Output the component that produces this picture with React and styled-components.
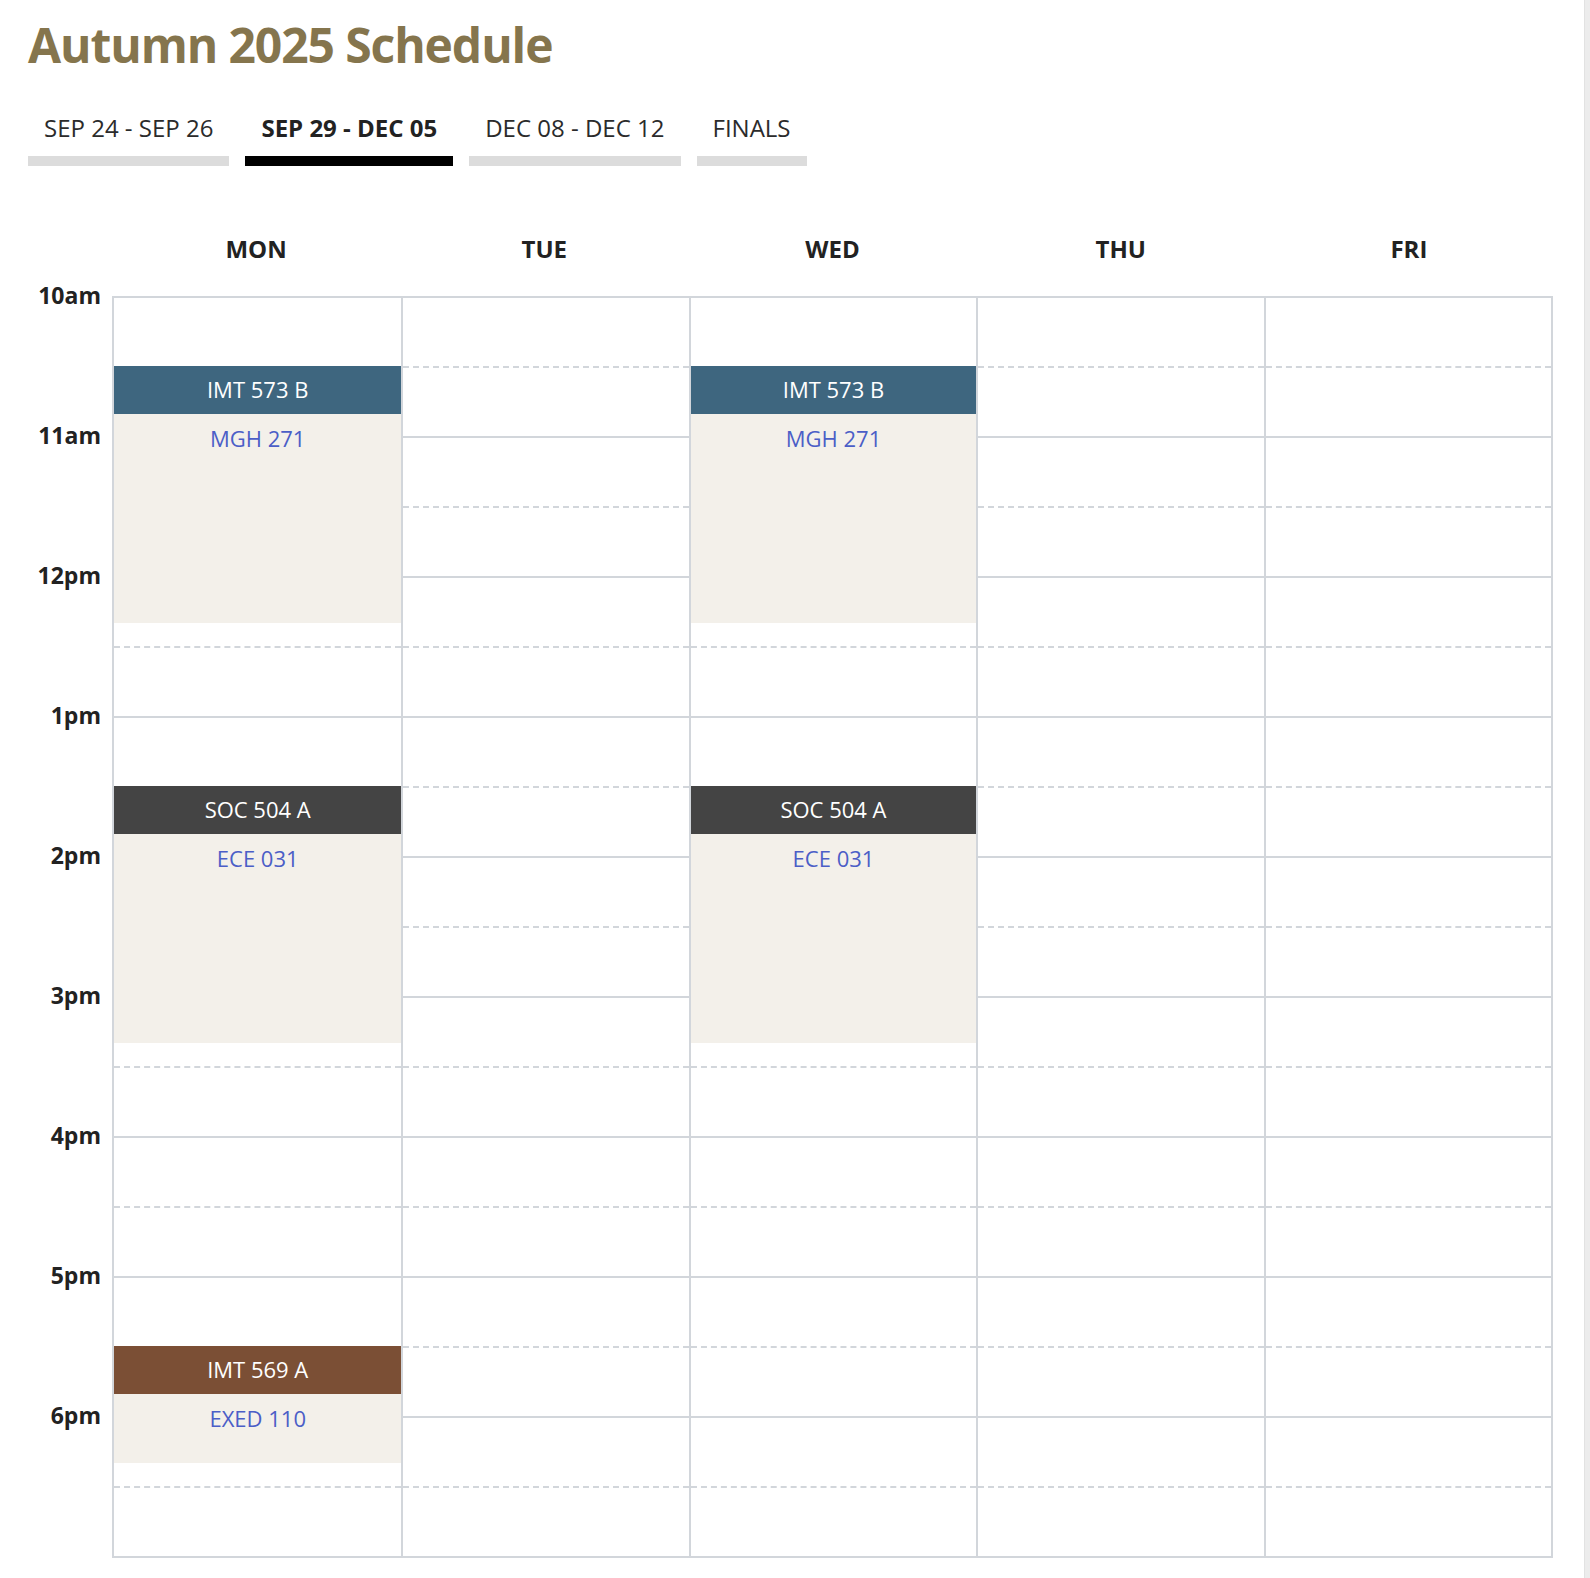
import React from "react";
import styled, { createGlobalStyle } from "styled-components";

const HOUR = 140;
const START = 10;
const HOURS = ["10am", "11am", "12pm", "1pm", "2pm", "3pm", "4pm", "5pm", "6pm"];
const DAYS = ["MON", "TUE", "WED", "THU", "FRI"];
const TABS = [
  { label: "SEP 24 - SEP 26" },
  { label: "SEP 29 - DEC 05", active: true },
  { label: "DEC 08 - DEC 12" },
  { label: "FINALS" },
];

const classes = [
  { code: "IMT 573 B", room: "MGH 271", color: "#3e667f", days: [0, 2], start: 10.5, end: 12 + 1 / 3 },
  { code: "SOC 504 A", room: "ECE 031", color: "#444444", days: [0, 2], start: 13.5, end: 15 + 1 / 3 },
  { code: "IMT 569 A", room: "EXED 110", color: "#7b4f35", days: [0], start: 17.5, end: 18 + 1 / 3 },
];

const GlobalStyle = createGlobalStyle`
  body {
    margin: 0;
    background: #fff;
    font-family: "Open Sans", "Liberation Sans", sans-serif;
    color: #222;
  }
`;

const Page = styled.div`
  padding: 16px 0 0 28px;
  width: 1525px;
`;

const Title = styled.h1`
  margin: 0;
  font-size: 48px;
  line-height: 58px;
  font-weight: 700;
  letter-spacing: -1.1px;
  color: #85754d;
`;

const Tabs = styled.div`
  display: flex;
  gap: 16px;
  margin-top: 38px;
`;

const Tab = styled.div`
  padding: 0 16px 12px;
  font-size: 24px;
  line-height: 32px;
  font-weight: ${({ $active }) => ($active ? 700 : 400)};
  color: ${({ $active }) => ($active ? "#222" : "#2b2b2b")};
  border-bottom: 10px solid ${({ $active }) => ($active ? "#000" : "#dcdcdc")};
  white-space: nowrap;
`;

const DayRow = styled.div`
  display: grid;
  grid-template-columns: repeat(5, 1fr);
  width: 1441px;
  margin: 68px 0 0 84px;
  height: 62px;
`;

const DayName = styled.div`
  text-align: center;
  font-size: 24px;
  line-height: 30px;
  font-weight: 700;
  color: #222;
`;

const Body = styled.div`
  display: flex;
`;

const TimeColumn = styled.div`
  width: 84px;
  flex: none;
`;

const TimeSlot = styled.div`
  height: ${HOUR}px;
  padding-right: 11px;
  box-sizing: border-box;
  text-align: right;
`;

const TimeLabel = styled.div`
  transform: translateY(-16px);
  font-size: 23px;
  line-height: 30px;
  font-weight: 700;
  color: #222;
`;

const Grid = styled.div`
  display: grid;
  grid-template-columns: repeat(5, 1fr);
  width: 1441px;
  box-sizing: border-box;
  border: 2px solid #d2d6db;
  border-bottom: none;
`;

const Column = styled.div`
  position: relative;
  border-left: ${({ $first }) => ($first ? "none" : "2px solid #d2d6db")};
`;

const Slot = styled.div`
  height: ${HOUR}px;
  box-sizing: border-box;
  border-bottom: 2px solid #d2d6db;
`;

const HalfHour = styled.div`
  height: ${HOUR / 2}px;
  box-sizing: border-box;
  border-bottom: 2px dashed #d2d6db;
`;

const Event = styled.div`
  position: absolute;
  left: 0;
  right: 0;
  background: #f3f0ea;
  text-align: center;
`;

const EventHead = styled.div`
  height: 48px;
  line-height: 46px;
  background: ${({ $color }) => $color};
  color: #fff;
  font-size: 22px;
`;

const Room = styled.a`
  display: block;
  line-height: 48px;
  font-size: 22px;
  color: #4b5ec7;
  text-decoration: none;
`;

const ScrollTrack = styled.div`
  position: fixed;
  top: 0;
  right: 0;
  width: 5px;
  height: 100vh;
  background: #ececec;
  border-left: 1px solid #e2e2e2;
`;

export default function App() {
  return (
    <>
      <GlobalStyle />
      <Page>
        <Title>Autumn 2025 Schedule</Title>
        <Tabs>
          {TABS.map((t) => (
            <Tab key={t.label} $active={t.active}>
              {t.label}
            </Tab>
          ))}
        </Tabs>
        <DayRow>
          {DAYS.map((d) => (
            <DayName key={d}>{d}</DayName>
          ))}
        </DayRow>
        <Body>
          <TimeColumn>
            {HOURS.map((h) => (
              <TimeSlot key={h}>
                <TimeLabel>{h}</TimeLabel>
              </TimeSlot>
            ))}
          </TimeColumn>
          <Grid>
            {DAYS.map((d, i) => (
              <Column key={d} $first={i === 0}>
                {HOURS.map((h) => (
                  <Slot key={h}>
                    <HalfHour />
                  </Slot>
                ))}
                {classes
                  .filter((c) => c.days.includes(i))
                  .map((c) => (
                    <Event
                      key={c.code}
                      style={{
                        top: (c.start - START) * HOUR - 2,
                        height: (c.end - c.start) * HOUR,
                      }}
                    >
                      <EventHead $color={c.color}>{c.code}</EventHead>
                      <Room href="#">{c.room}</Room>
                    </Event>
                  ))}
              </Column>
            ))}
          </Grid>
        </Body>
      </Page>
      <ScrollTrack />
    </>
  );
}
